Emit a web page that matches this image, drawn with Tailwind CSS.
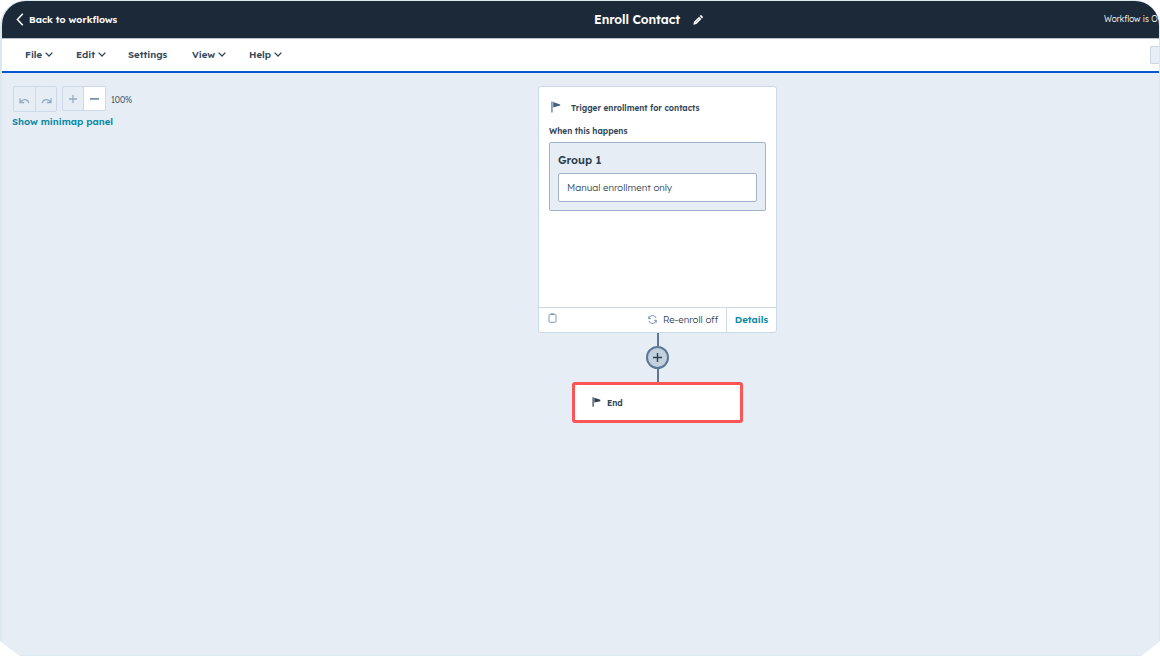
<!DOCTYPE html>
<html lang="en">
<head>
    <meta charset="UTF-8">
    <meta name="viewport" content="width=device-width, initial-scale=1.0">
    <title>Enroll Contact</title>
    <script src="https://cdn.jsdelivr.net/npm/@tailwindcss/browser@4"></script>
    <style>
        body { font-family: Lexend, Inter, "Open Sans", sans-serif; }
    </style>
</head>
<body class="bg-white text-[#33475b] overflow-hidden">

    <div class="w-[1160px] h-[656px] bg-[#dbe8ef] pl-[2px] pr-px pt-px pb-px rounded-t-[26px] [clip-path:polygon(0_0,100%_0,100%_641px,1141px_100%,20px_100%,0_641px)]">
        <div class="h-full flex flex-col overflow-hidden rounded-t-[24px] bg-[#e6edf5] whitespace-nowrap">

            <!-- Title bar -->
            <header class="h-[37px] shrink-0 bg-[#1c2938] text-white grid grid-cols-[592px_1fr_55px] items-center">
                <a class="flex items-center pl-[14px] text-[9.6px] font-semibold">
                    <svg class="w-[8px] h-[13px] mr-[5px]" viewBox="0 0 8 13" fill="none" stroke="currentColor" stroke-width="1.5"><path d="M6.8 .7 1.4 6.5l5.4 5.8"/></svg>
                    <span>Back to workflows</span>
                </a>
                <div class="flex items-center">
                    <h1 class="w-[99px] pt-px text-[12.3px] font-semibold tracking-[-0.1px]">Enroll Contact</h1>
                    <svg class="w-[10px] h-[10px]" viewBox="0 0 10 10"><path d="M.3 9.8 1 6.8 6 1.7 8.4 4.1 3.4 9.1zM6.7 1 7.5.2Q8 0 8.4.3L9.8 1.8Q10.1 2.2 9.8 2.6L9 3.4z" fill="#fff"/><path d="m2.4 7.5 4-4" stroke="#1c2938" stroke-width=".4"/></svg>
                </div>
                <span class="text-[8.3px] font-light">Workflow is O</span>
            </header>

            <!-- Menu -->
            <nav class="h-[35px] shrink-0 bg-white border-t border-t-[#b9bec7] border-b-2 border-b-[#0758cf] flex items-center justify-between">
                <div class="flex items-center pl-[23px] pb-px text-[9.6px] font-semibold">
                    <div class="w-[51px] flex items-center gap-[3px]"><span>File</span><svg class="w-[8px] h-[5px]" viewBox="0 0 8 5" fill="none" stroke="currentColor" stroke-width="1.3"><path d="m.6.6 3.4 3.4L7.4.6"/></svg></div>
                    <div class="w-[52px] flex items-center gap-[3px]"><span>Edit</span><svg class="w-[8px] h-[5px]" viewBox="0 0 8 5" fill="none" stroke="currentColor" stroke-width="1.3"><path d="m.6.6 3.4 3.4L7.4.6"/></svg></div>
                    <div class="w-[64px]">Settings</div>
                    <div class="w-[57px] flex items-center gap-[3px]"><span>View</span><svg class="w-[8px] h-[5px]" viewBox="0 0 8 5" fill="none" stroke="currentColor" stroke-width="1.3"><path d="m.6.6 3.4 3.4L7.4.6"/></svg></div>
                    <div class="flex items-center gap-[3px]"><span>Help</span><svg class="w-[8px] h-[5px]" viewBox="0 0 8 5" fill="none" stroke="currentColor" stroke-width="1.3"><path d="m.6.6 3.4 3.4L7.4.6"/></svg></div>
                </div>
                <div class="w-[9px] h-[18px] bg-[#e7eef6] border border-r-0 border-[#cbd6e2] rounded-l-[2px]"></div>
            </nav>

            <!-- Canvas -->
            <main class="flex-1 flex">
                <aside class="w-[536px] shrink-0 pl-[11px] pt-[13px]">
                    <div class="flex items-start h-[26px] text-[#94aac2]">
                        <div class="w-[44px] h-[26px] flex border border-[#cbd9e8] rounded-[2px]">
                            <div class="w-[22px] flex items-center justify-center border-r border-[#cbd9e8]">
                                <svg class="w-[11px] h-[7px] mt-[2px]" viewBox="0 0 11 7" fill="none" stroke="currentColor" stroke-width="1.3"><path d="M1 1.3v4.2h4.2M1.3 5.2C3.4 1.7 8.6 1.5 9.9 6.2"/></svg>
                            </div>
                            <div class="flex-1 flex items-center justify-center">
                                <svg class="w-[11px] h-[7px] mt-[2px]" viewBox="0 0 11 7" fill="none" stroke="currentColor" stroke-width="1.3"><path d="M10 1.3v4.2H5.8M9.7 5.2C7.6 1.7 2.4 1.5 1.1 6.2"/></svg>
                            </div>
                        </div>
                        <div class="w-[44px] h-[25px] ml-[5px] flex border border-[#cbd9e8] rounded-[2px]">
                            <div class="w-[21px] flex items-center justify-center border-r border-[#cbd9e8]">
                                <svg class="w-[8px] h-[8px]" viewBox="0 0 8 8" stroke="currentColor" stroke-width="1.3"><path d="M4 0v8M0 4h8"/></svg>
                            </div>
                            <div class="flex-1 flex items-center justify-center bg-white">
                                <svg class="w-[9px] h-[2px]" viewBox="0 0 9 2"><path d="M0 0h9v1.7H0z" fill="#7990ad"/></svg>
                            </div>
                        </div>
                        <span class="ml-[5px] mt-[7px] text-[8.5px] leading-[13px] font-light tracking-[-0.1px] text-[#33475b]">100%</span>
                    </div>
                    <a class="block mt-[2px] -ml-px text-[9.6px] leading-[14px] font-semibold text-[#0889a6]">Show minimap panel</a>
                </aside>

                <div class="w-[239px] pt-[13px] flex flex-col items-center">
                    <!-- Trigger card -->
                    <section class="w-[239px] h-[247px] shrink-0 bg-white border border-[#cbd9e8] rounded-[3px] flex flex-col">
                        <div class="flex-1 px-[10px]">
                            <div class="flex items-center mt-[13px] h-[16px]">
                                <svg class="w-[10px] h-[12px] ml-[2px] mb-[2px] mr-[10px]" viewBox="0 0 10 12" fill="#426384"><path d="M.4.5h1.1v11H.4zM2.2 1 9.2 3.5v1L2.2 6.4z"/></svg>
                                <span class="text-[8.2px] font-semibold">Trigger enrollment for contacts</span>
                            </div>
                            <div class="mt-[8px] text-[8.25px] leading-[14px] font-semibold">When this happens</div>
                            <div class="mt-[4px] w-[217px] h-[69px] bg-[#e6edf5] border border-[#9fb4ca] rounded-[2px] px-[8px]">
                                <div class="mt-[9px] text-[11px] leading-[16px] font-semibold text-[#2d3e50]">Group 1</div>
                                <div class="mt-[5px] h-[29px] w-[199px] flex items-center bg-white border border-[#9fb4ca] rounded-[2px] pl-[8px] text-[9.6px] font-light">Manual enrollment only</div>
                            </div>
                        </div>
                        <div class="h-[25px] flex items-center border-t border-[#cbd9e8] text-[9.6px]">
                            <svg class="w-[9px] h-[10px] ml-[9px] mb-[4px]" viewBox="0 0 9 10" fill="none" stroke="#7c98b6"><rect x="1" y="1.3" width="7" height="8" rx="1.2"/><path d="M2.8 1.2h3.4" stroke-width="1.6"/></svg>
                            <svg class="w-[9px] h-[9px] ml-auto mr-[6px] mb-px" viewBox="0 0 9 9" fill="none" stroke="#7c98b6" stroke-width="1"><path d="M.7 3.7A3.8 3.8 0 0 1 8.1 3.2M8.3 5.3A3.8 3.8 0 0 1 .9 5.8M.7 1.4v2.3H3M8.3 7.6V5.3H6"/></svg>
                            <span class="w-[56px] pb-[2px] font-light">Re-enroll off</span>
                            <div class="ml-[7px] w-[50px] h-full pb-px flex items-center justify-center border-l border-[#cbd9e8] font-semibold text-[#0889a6]">Details</div>
                        </div>
                    </section>

                    <div class="w-[2px] h-[13px] shrink-0 bg-[#5b7897]"></div>
                    <div class="w-[23px] h-[23px] shrink-0 rounded-full bg-[#c3d0de] border-2 border-[#5b7897] flex items-center justify-center">
                        <svg class="w-[9px] h-[9px]" viewBox="0 0 9 9" stroke="#2d3e50" stroke-width="1.4"><path d="M4.5 0v9M0 4.5h9"/></svg>
                    </div>
                    <div class="w-[2px] h-[13px] shrink-0 bg-[#5b7897]"></div>

                    <!-- End node -->
                    <div class="w-[171px] h-[41px] shrink-0 flex items-center bg-white border-[3px] border-[#fc5555] rounded-[3px] pl-[17px] text-[#2d3e50]">
                        <svg class="w-[9px] h-[10px] mb-[2px] mr-[6px]" viewBox="0 0 9 10" fill="currentColor"><path d="M.5.3h1.2v9.5H.5zM2.3.8 8.3 2.7v1.5L2.3 5.5z"/></svg>
                        <span class="pt-px text-[8.25px] font-semibold">End</span>
                    </div>
                </div>
            </main>
        </div>
    </div>

</body>
</html>
